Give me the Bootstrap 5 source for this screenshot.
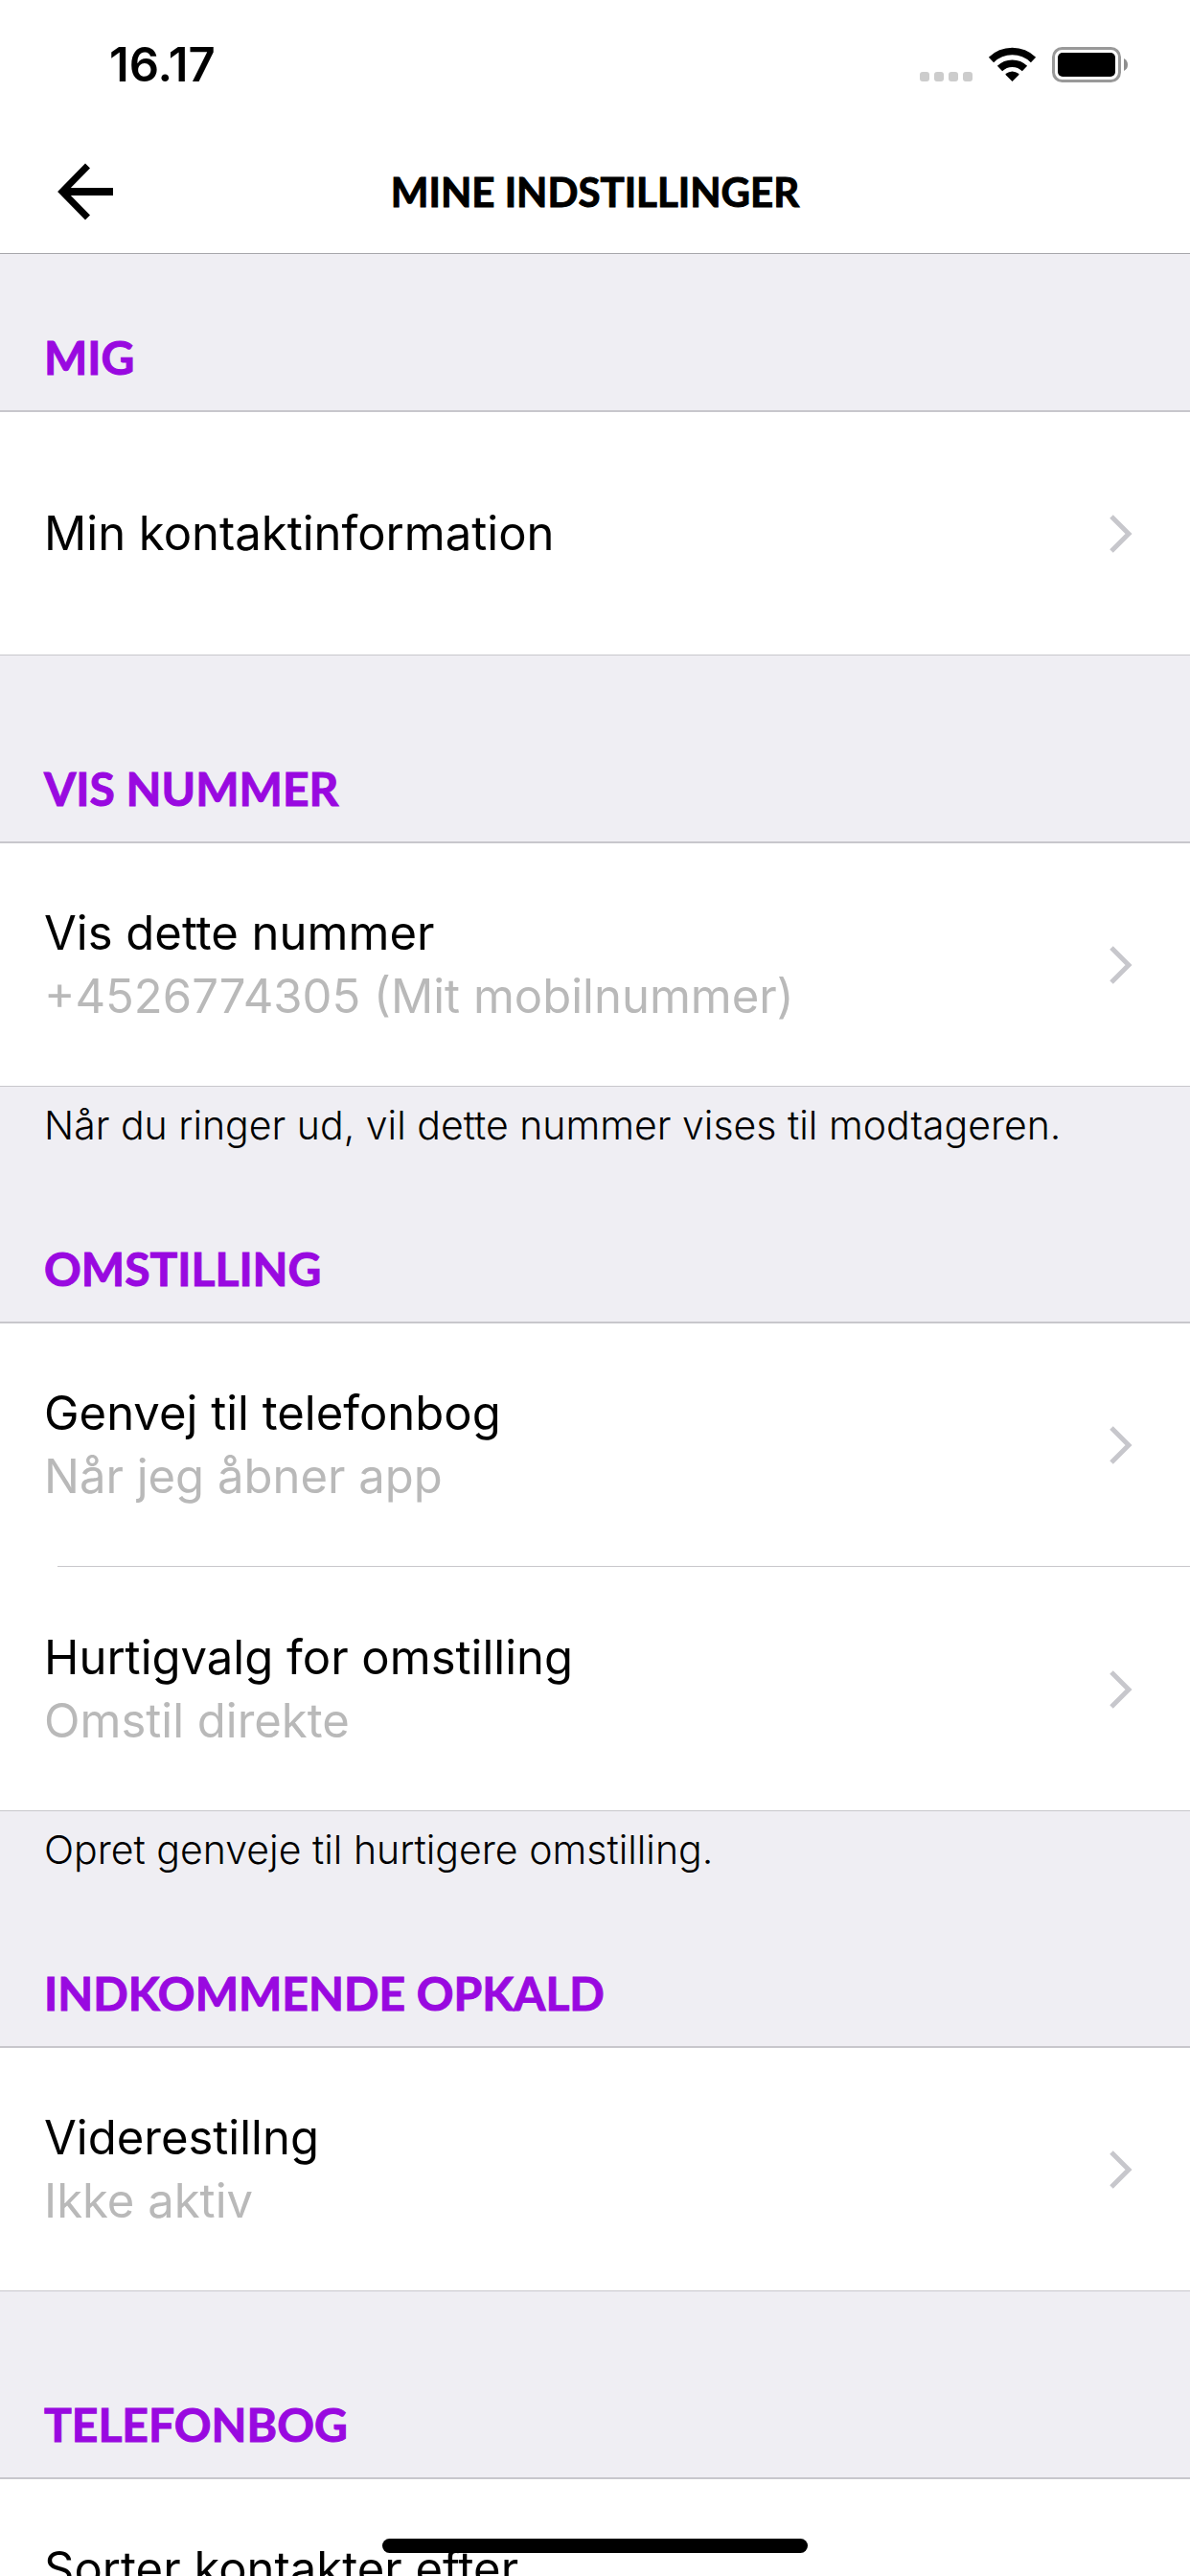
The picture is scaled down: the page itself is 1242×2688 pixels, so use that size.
<!DOCTYPE html>
<html lang="da">
<head>
<meta charset="utf-8">
<meta name="viewport" content="width=device-width, initial-scale=1">
<title>Mine indstillinger</title>
<link href="https://cdn.jsdelivr.net/npm/bootstrap@5.3.0/dist/css/bootstrap.min.css" rel="stylesheet">
<style>
  :root { --canvas: #efeef3; --line: #c8c7cc; --accent: #9909e0; --muted: #b9b9b9; }
  body { font-family: Inter, "Liberation Sans", sans-serif; color: #000; background: #fff; }
  .status-bar { height: 136px; padding: 0 65px 0 114px; }
  .clock { font-size: 49px; line-height: 56px; font-weight: 600; }
  .title-bar { height: 129px; padding: 0 60px; border-bottom: 1px solid #a7a7ab; }
  .side-slot { width: 60px; }
  .page-title, .section-title { font-family: Lato, "Open Sans", sans-serif; font-weight: 700; line-height: 60px; -webkit-text-stroke: 1px currentColor; }
  .page-title { font-size: 42px; }
  .section-title { font-size: 48px; color: var(--accent); padding: 109px 46px 25px; }
  .settings { background: var(--canvas); }
  .settings::-webkit-scrollbar { display: none; }
  section:first-child .section-title { padding-top: 78px; }
  .after-note .section-title { padding-top: 95px; }
  .rows { background: #fff; border-top: 2px solid var(--line); border-bottom: 1px solid var(--line); }
  .setting { min-height: 253px; padding: 0 60px 0 46px; font-size: 49px; line-height: 66px; }
  .setting-text { min-height: 132px; }
  .setting-value { color: var(--muted); }
  .divider { height: 2px; margin-left: 60px; border-top: 1px solid var(--line); }
  .section-note { font-size: 41px; line-height: 50px; font-weight: 300; padding: 15px 46px 0; }
  .home-bar { width: 444px; height: 15px; bottom: 24px; }
</style>
</head>
<body>
<div class="vh-100 d-flex flex-column overflow-hidden">
  <div class="status-bar d-flex align-items-center justify-content-between flex-shrink-0">
    <span class="clock">16.17</span>
    <svg width="217" height="38" viewBox="0 0 217 38" role="img" aria-label="Wi-Fi, batteri">
      <g fill="#ccc"><rect x="0" y="26" width="10" height="10" rx="3"/><rect x="15" y="26" width="10" height="10" rx="3"/><rect x="30" y="26" width="10" height="10" rx="3"/><rect x="45" y="26" width="10" height="10" rx="3"/></g>
      <g fill="none" stroke="#000" stroke-width="7.5"><path d="M74.500 13.500a31.500 31.500 0 0 1 44 0"/><path d="M83.500 22.500a18.500 18.500 0 0 1 26 0"/></g>
      <path d="M89.500 28q7-5 14 0q0 1-.5 1.500L96.500 36L90 29.500q-.5-.5-.5-1.500z"/>
      <rect x="139.500" y="1.500" width="69" height="34" rx="9" fill="none" stroke="#999" stroke-width="3"/>
      <rect x="144" y="6" width="60" height="25" rx="5"/>
      <path d="M213 12q4 2 4 6.500t-4 6.500z" fill="#8e8e8e"/>
    </svg>
  </div>
  <header class="title-bar d-flex align-items-center justify-content-between flex-shrink-0">
    <button type="button" class="side-slot btn p-0 border-0 d-flex" aria-label="Tilbage">
      <svg width="58" height="60" viewBox="0 0 58 60" fill="none" stroke="#000"><path d="M58 30H6" stroke-width="8"/><path d="M31.500 3L5 30l26.500 27" stroke-width="7"/></svg>
    </button>
    <h1 class="page-title m-0">MINE INDSTILLINGER</h1>
    <span class="side-slot"></span>
  </header>
  <main class="settings flex-grow-1 overflow-auto">
    <section>
      <h2 class="section-title m-0">MIG</h2>
      <div class="rows">
        <a href="#" class="setting d-flex align-items-center justify-content-between text-decoration-none text-black">
          <span>Min kontaktinformation</span>
          <svg width="24" height="40" viewBox="0 0 24 40" fill="none" stroke="#c7c7cc" stroke-width="5"><path d="M2 2l18 18L2 38"/></svg>
        </a>
      </div>
    </section>
    <section>
      <h2 class="section-title m-0">VIS NUMMER</h2>
      <div class="rows">
        <a href="#" class="setting d-flex align-items-center justify-content-between text-decoration-none text-black">
          <span class="setting-text d-flex flex-column"><span>Vis dette nummer</span><span class="setting-value">+4526774305 (Mit mobilnummer)</span></span>
          <svg width="24" height="40" viewBox="0 0 24 40" fill="none" stroke="#c7c7cc" stroke-width="5"><path d="M2 2l18 18L2 38"/></svg>
        </a>
      </div>
      <p class="section-note m-0">Når du ringer ud, vil dette nummer vises til modtageren.</p>
    </section>
    <section class="after-note">
      <h2 class="section-title m-0">OMSTILLING</h2>
      <div class="rows">
        <a href="#" class="setting d-flex align-items-center justify-content-between text-decoration-none text-black">
          <span class="setting-text d-flex flex-column"><span>Genvej til telefonbog</span><span class="setting-value">Når jeg åbner app</span></span>
          <svg width="24" height="40" viewBox="0 0 24 40" fill="none" stroke="#c7c7cc" stroke-width="5"><path d="M2 2l18 18L2 38"/></svg>
        </a>
        <div class="divider"></div>
        <a href="#" class="setting d-flex align-items-center justify-content-between text-decoration-none text-black">
          <span class="setting-text d-flex flex-column"><span>Hurtigvalg for omstilling</span><span class="setting-value">Omstil direkte</span></span>
          <svg width="24" height="40" viewBox="0 0 24 40" fill="none" stroke="#c7c7cc" stroke-width="5"><path d="M2 2l18 18L2 38"/></svg>
        </a>
      </div>
      <p class="section-note m-0">Opret genveje til hurtigere omstilling.</p>
    </section>
    <section class="after-note">
      <h2 class="section-title m-0">INDKOMMENDE OPKALD</h2>
      <div class="rows">
        <a href="#" class="setting d-flex align-items-center justify-content-between text-decoration-none text-black">
          <span class="setting-text d-flex flex-column"><span>Viderestillng</span><span class="setting-value">Ikke aktiv</span></span>
          <svg width="24" height="40" viewBox="0 0 24 40" fill="none" stroke="#c7c7cc" stroke-width="5"><path d="M2 2l18 18L2 38"/></svg>
        </a>
      </div>
    </section>
    <section>
      <h2 class="section-title m-0">TELEFONBOG</h2>
      <div class="rows">
        <a href="#" class="setting d-flex align-items-center justify-content-between text-decoration-none text-black">
          <span class="setting-text d-flex flex-column"><span>Sorter kontakter efter</span></span>
        </a>
      </div>
    </section>
  </main>
  <div class="home-bar position-fixed start-50 translate-middle-x bg-black rounded-pill"></div>
</div>
<script src="https://cdn.jsdelivr.net/npm/bootstrap@5.3.0/dist/js/bootstrap.bundle.min.js"></script>
</body>
</html>
